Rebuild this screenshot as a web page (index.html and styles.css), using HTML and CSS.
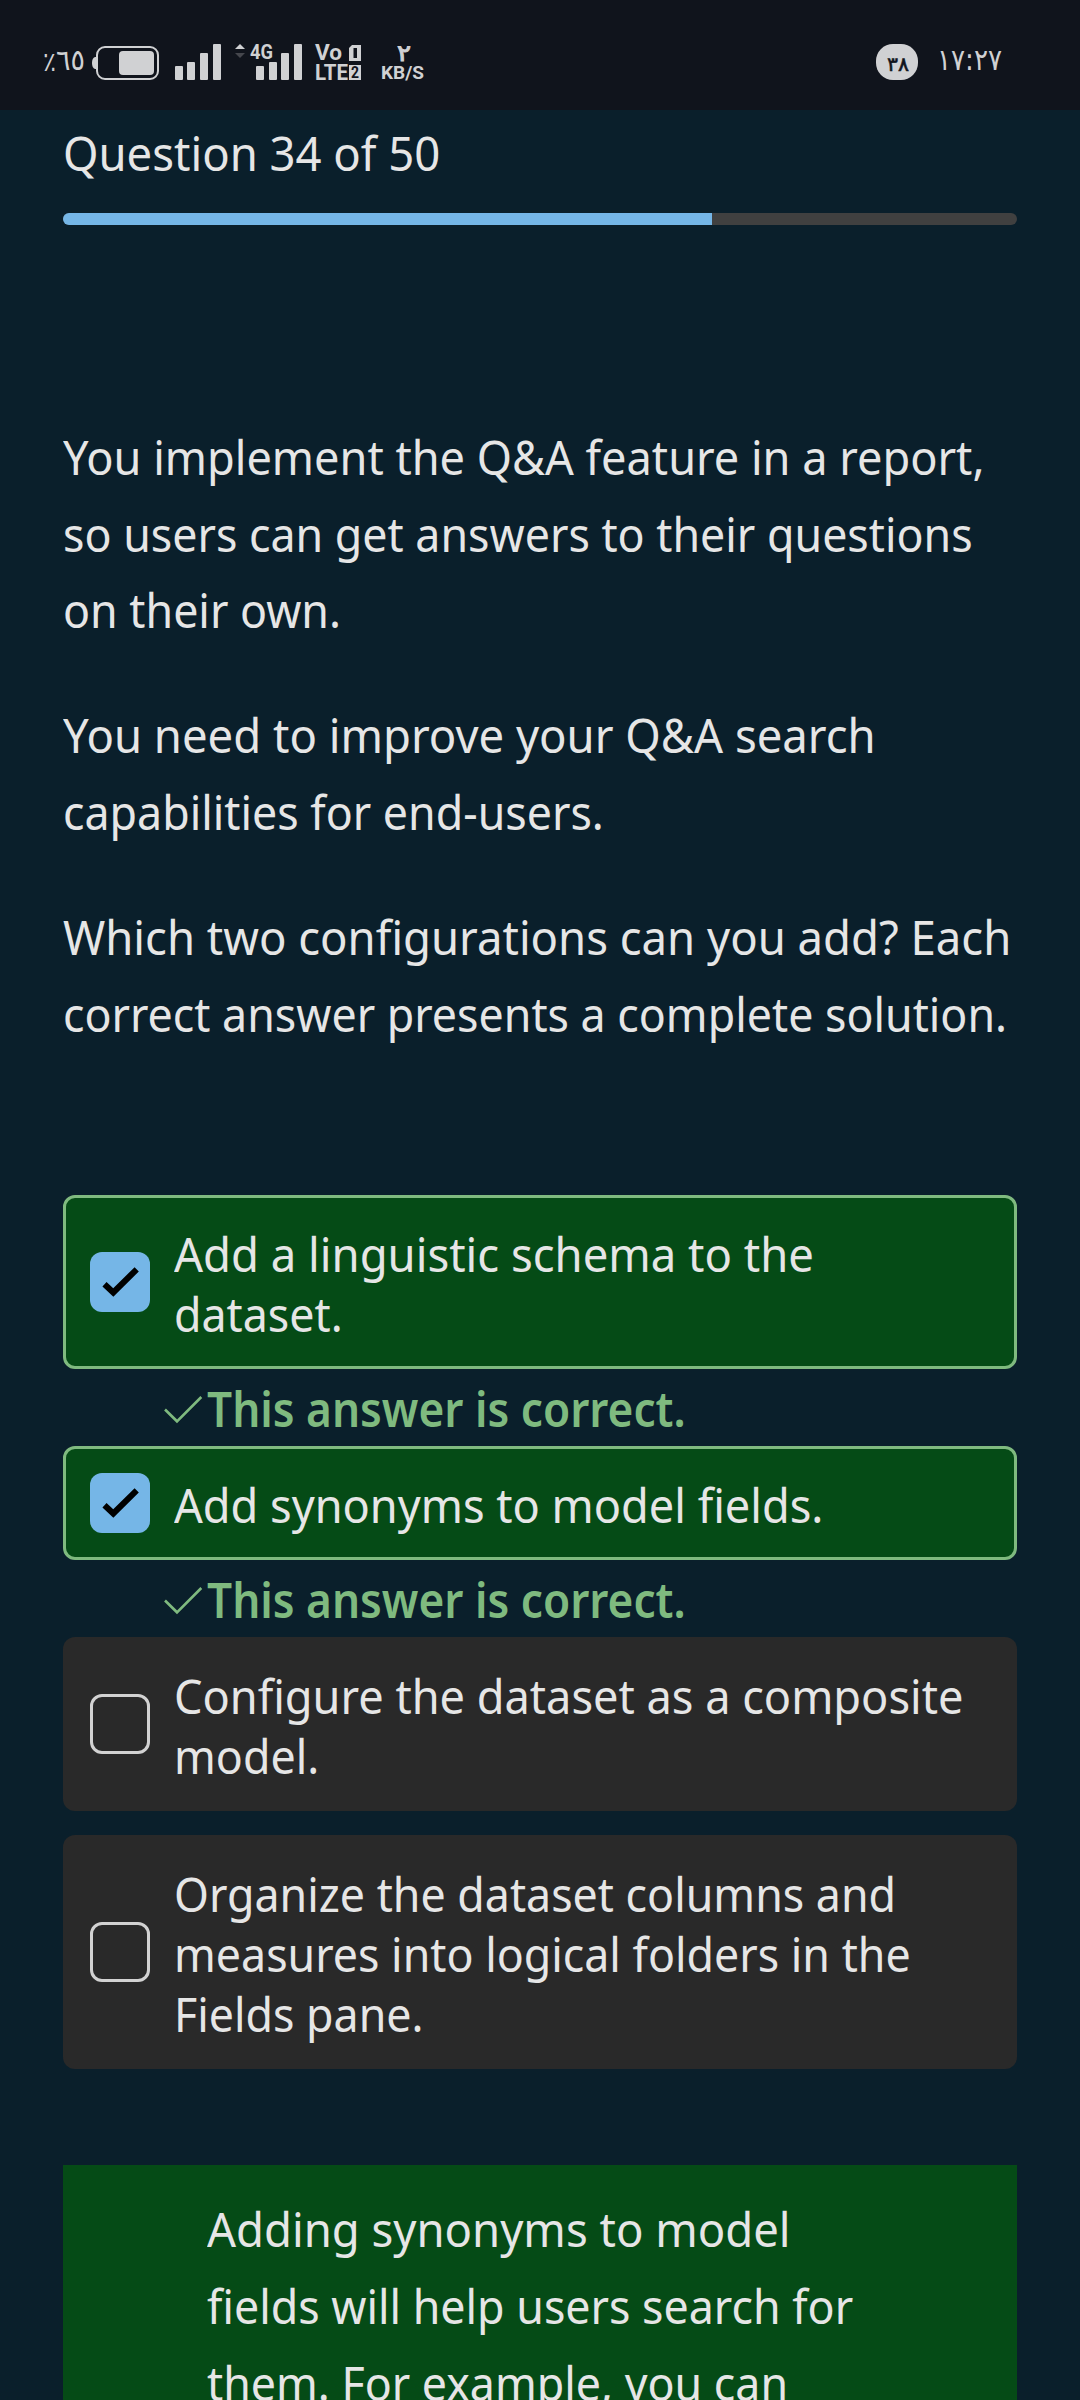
FILE: index.html
```html
<!DOCTYPE html>
<html lang="en">
<head>
<meta charset="utf-8">
<title>Practice Assessment</title>
<link rel="stylesheet" href="styles.css">
</head>
<body>
<header class="status">
  <svg class="status-text" width="48" height="40" viewBox="40 40 48 40"><text class="ar" x="43" y="71" font-size="27" textLength="13" lengthAdjust="spacingAndGlyphs">٪</text><text class="ar" x="56" y="70" font-size="29" textLength="29" lengthAdjust="spacingAndGlyphs">٦٥</text></svg>
  <svg width="72" height="40" viewBox="88 40 72 40"><path d="M97 57h-2q-3 1-3 6t3 6h2z" fill="#d0d1d3"/><rect x="97" y="47" width="61" height="32" rx="8" fill="none" stroke="#d0d1d3" stroke-width="2"/><rect x="119" y="51" width="35" height="24" rx="4" fill="#d0d1d3"/></svg>
  <svg width="150" height="40" viewBox="160 40 150 40" fill="#d0d1d3"><rect x="175" y="66" width="8" height="14" rx="1"/><rect x="187" y="62" width="8" height="18" rx="1"/><rect x="200" y="53" width="8" height="27" rx="1"/><rect x="213" y="44" width="8" height="36" rx="1"/><path d="M235 49l5-5 5 5z"/><path d="M235 53h10l-5 5z" fill="#45474d"/><text class="tag" x="250" y="59" font-size="21" textLength="23" lengthAdjust="spacingAndGlyphs">4G</text><rect x="256" y="66" width="8" height="14" rx="1"/><rect x="269" y="62" width="8" height="18" rx="1"/><rect x="281" y="53" width="8" height="27" rx="1"/><rect x="294" y="44" width="8" height="36" rx="1"/></svg>
  <svg width="60" height="40" viewBox="310 40 60 40" fill="#d0d1d3"><text class="tag" x="315" y="60" font-size="22" textLength="27" lengthAdjust="spacingAndGlyphs">Vo</text><text class="tag" x="315" y="80" font-size="22" textLength="33" lengthAdjust="spacingAndGlyphs">LTE</text><path d="M352 45h9v16h-12v-13z"/><rect x="353.500" y="48" width="3.500" height="10" fill="#10141c"/><path d="M349 65h12v15h-12z"/><text class="tag" x="351" y="78" font-size="16" textLength="8" lengthAdjust="spacingAndGlyphs" fill="#10141c">2</text></svg>
  <svg class="status-text" width="60" height="40" viewBox="370 40 60 40"><text class="ar heavy" x="397" y="61" font-size="23" textLength="14" lengthAdjust="spacingAndGlyphs">٢</text><text class="tag" x="381" y="79" font-size="18" textLength="43" lengthAdjust="spacingAndGlyphs">KB/S</text></svg>
  <svg class="clock" width="130" height="40" viewBox="874 40 130 40" fill="#d0d1d3"><rect x="876" y="44" width="42" height="36" rx="17"/><text class="ar bold-sm" x="887" y="71" font-size="20" textLength="22" lengthAdjust="spacingAndGlyphs">٣٨</text><text class="ar" x="937" y="70" font-size="30" textLength="65" lengthAdjust="spacingAndGlyphs">١٧:٢٧</text></svg>
</header>
<main class="quiz">
  <h1 class="counter"><span class="line wide">Question 34 of 50</span></h1>
  <div class="progress"><div class="progress-fill" style="width:68%"></div></div>
  <section class="question">
    <p><span class="line">You implement the Q&amp;A feature in a report,</span><span class="line tight">so users can get answers to their questions</span><span class="line tight">on their own.</span></p>
    <p><span class="line wide">You need to improve your Q&amp;A search</span><span class="line tight">capabilities for end-users.</span></p>
    <p><span class="line wide">Which two configurations can you add? Each</span><span class="line tight">correct answer presents a complete solution.</span></p>
  </section>
  <section class="options">
    <div class="option correct">
      <span class="box checked"><svg width="60" height="60" viewBox="0 0 60 60"><path d="M14.500 32.200L23.300 40.500L46.700 17.300" fill="none" stroke="#000" stroke-width="6"/></svg></span>
      <span class="label"><span class="line wide">Add a linguistic schema to the</span><span class="line tight">dataset.</span></span>
    </div>
    <div class="feedback"><svg width="44" height="36" viewBox="0 0 44 36"><path d="M2 19.500L14 31.300L38.300 7" fill="none" stroke="#7fba7f" stroke-width="2.600"/></svg><span class="line semibold">This answer is correct.</span></div>
    <div class="option correct">
      <span class="box checked"><svg width="60" height="60" viewBox="0 0 60 60"><path d="M14.500 32.200L23.300 40.500L46.700 17.300" fill="none" stroke="#000" stroke-width="6"/></svg></span>
      <span class="label"><span class="line">Add synonyms to model fields.</span></span>
    </div>
    <div class="feedback"><svg width="44" height="36" viewBox="0 0 44 36"><path d="M2 19.500L14 31.300L38.300 7" fill="none" stroke="#7fba7f" stroke-width="2.600"/></svg><span class="line semibold">This answer is correct.</span></div>
    <div class="option">
      <span class="box"></span>
      <span class="label"><span class="line">Configure the dataset as a composite</span><span class="line tight">model.</span></span>
    </div>
    <div class="option spaced">
      <span class="box"></span>
      <span class="label"><span class="line tight">Organize the dataset columns and</span><span class="line tight">measures into logical folders in the</span><span class="line tight">Fields pane.</span></span>
    </div>
  </section>
  <section class="explanation"><span class="line wide">Adding synonyms to model</span><span class="line tight">fields will help users search for</span><span class="line tight">them. For example, you can</span></section>
</main>
</body>
</html>
```
FILE: styles.css
```css
* { box-sizing: border-box; }
html, body { height: 2400px; overflow: hidden; }
body {
  margin: 0;
  background: #0a1f2b;
  color: #e6e6e6;
  font-family: "Noto Sans", "Open Sans", sans-serif;
  font-size: 48px;
  line-height: 76.8px;
  white-space: nowrap;
}
svg { display: block; flex: none; overflow: visible; }
.line { display: block; width: max-content; transform: scaleX(.94); transform-origin: 0 50%; }
.wide { transform: scaleX(.947); }
.tight { transform: scaleX(.932); }
.semibold { transform: scaleX(.92); }
.status { display: flex; height: 110px; padding: 40px 76px 0 40px; background: #10141c; }
.status-text { fill: #d0d1d3; }
.clock { margin-left: auto; }
.ar { font-family: "DejaVu Sans", sans-serif; direction: ltr; unicode-bidi: bidi-override; }
.heavy { stroke: #d0d1d3; stroke-width: 1px; }
.bold-sm { fill: #10141c; stroke: #10141c; stroke-width: .6px; }
.tag { font-family: Roboto, sans-serif; font-weight: 700; }
.quiz { padding: 5px 63px 0; }
.counter { margin: 0; font-size: 48px; font-weight: 400; }
.progress { height: 12px; margin-top: 21px; border-radius: 6px; background: #404040; overflow: hidden; }
.progress-fill { height: 100%; background: #75b6e7; }
.question { padding-top: 194px; }
.question p { margin: 0 0 48px; }
.options { padding-top: 95px; }
.option {
  display: flex;
  align-items: center;
  gap: 24px;
  padding: 27px;
  border-radius: 12px;
  background: #292929;
  line-height: 60px;
}
.label { transform: translateY(2px); }
.correct { padding: 24px; border: 3px solid #7fba7f; background: #054b16; }
.spaced { margin-top: 24px; }
.box { flex: none; width: 60px; height: 60px; border: 3px solid #d2d2d2; border-radius: 12px; }
.checked { border: 0; background: #75b6e7; }
.feedback { display: flex; align-items: center; height: 77px; padding-left: 100px; color: #7fba7f; font-weight: 600; }
.feedback .line { padding-top: 3px; }
.explanation { height: 235px; margin-top: 96px; padding: 26px 144px 0; background: #054b16; }
```
